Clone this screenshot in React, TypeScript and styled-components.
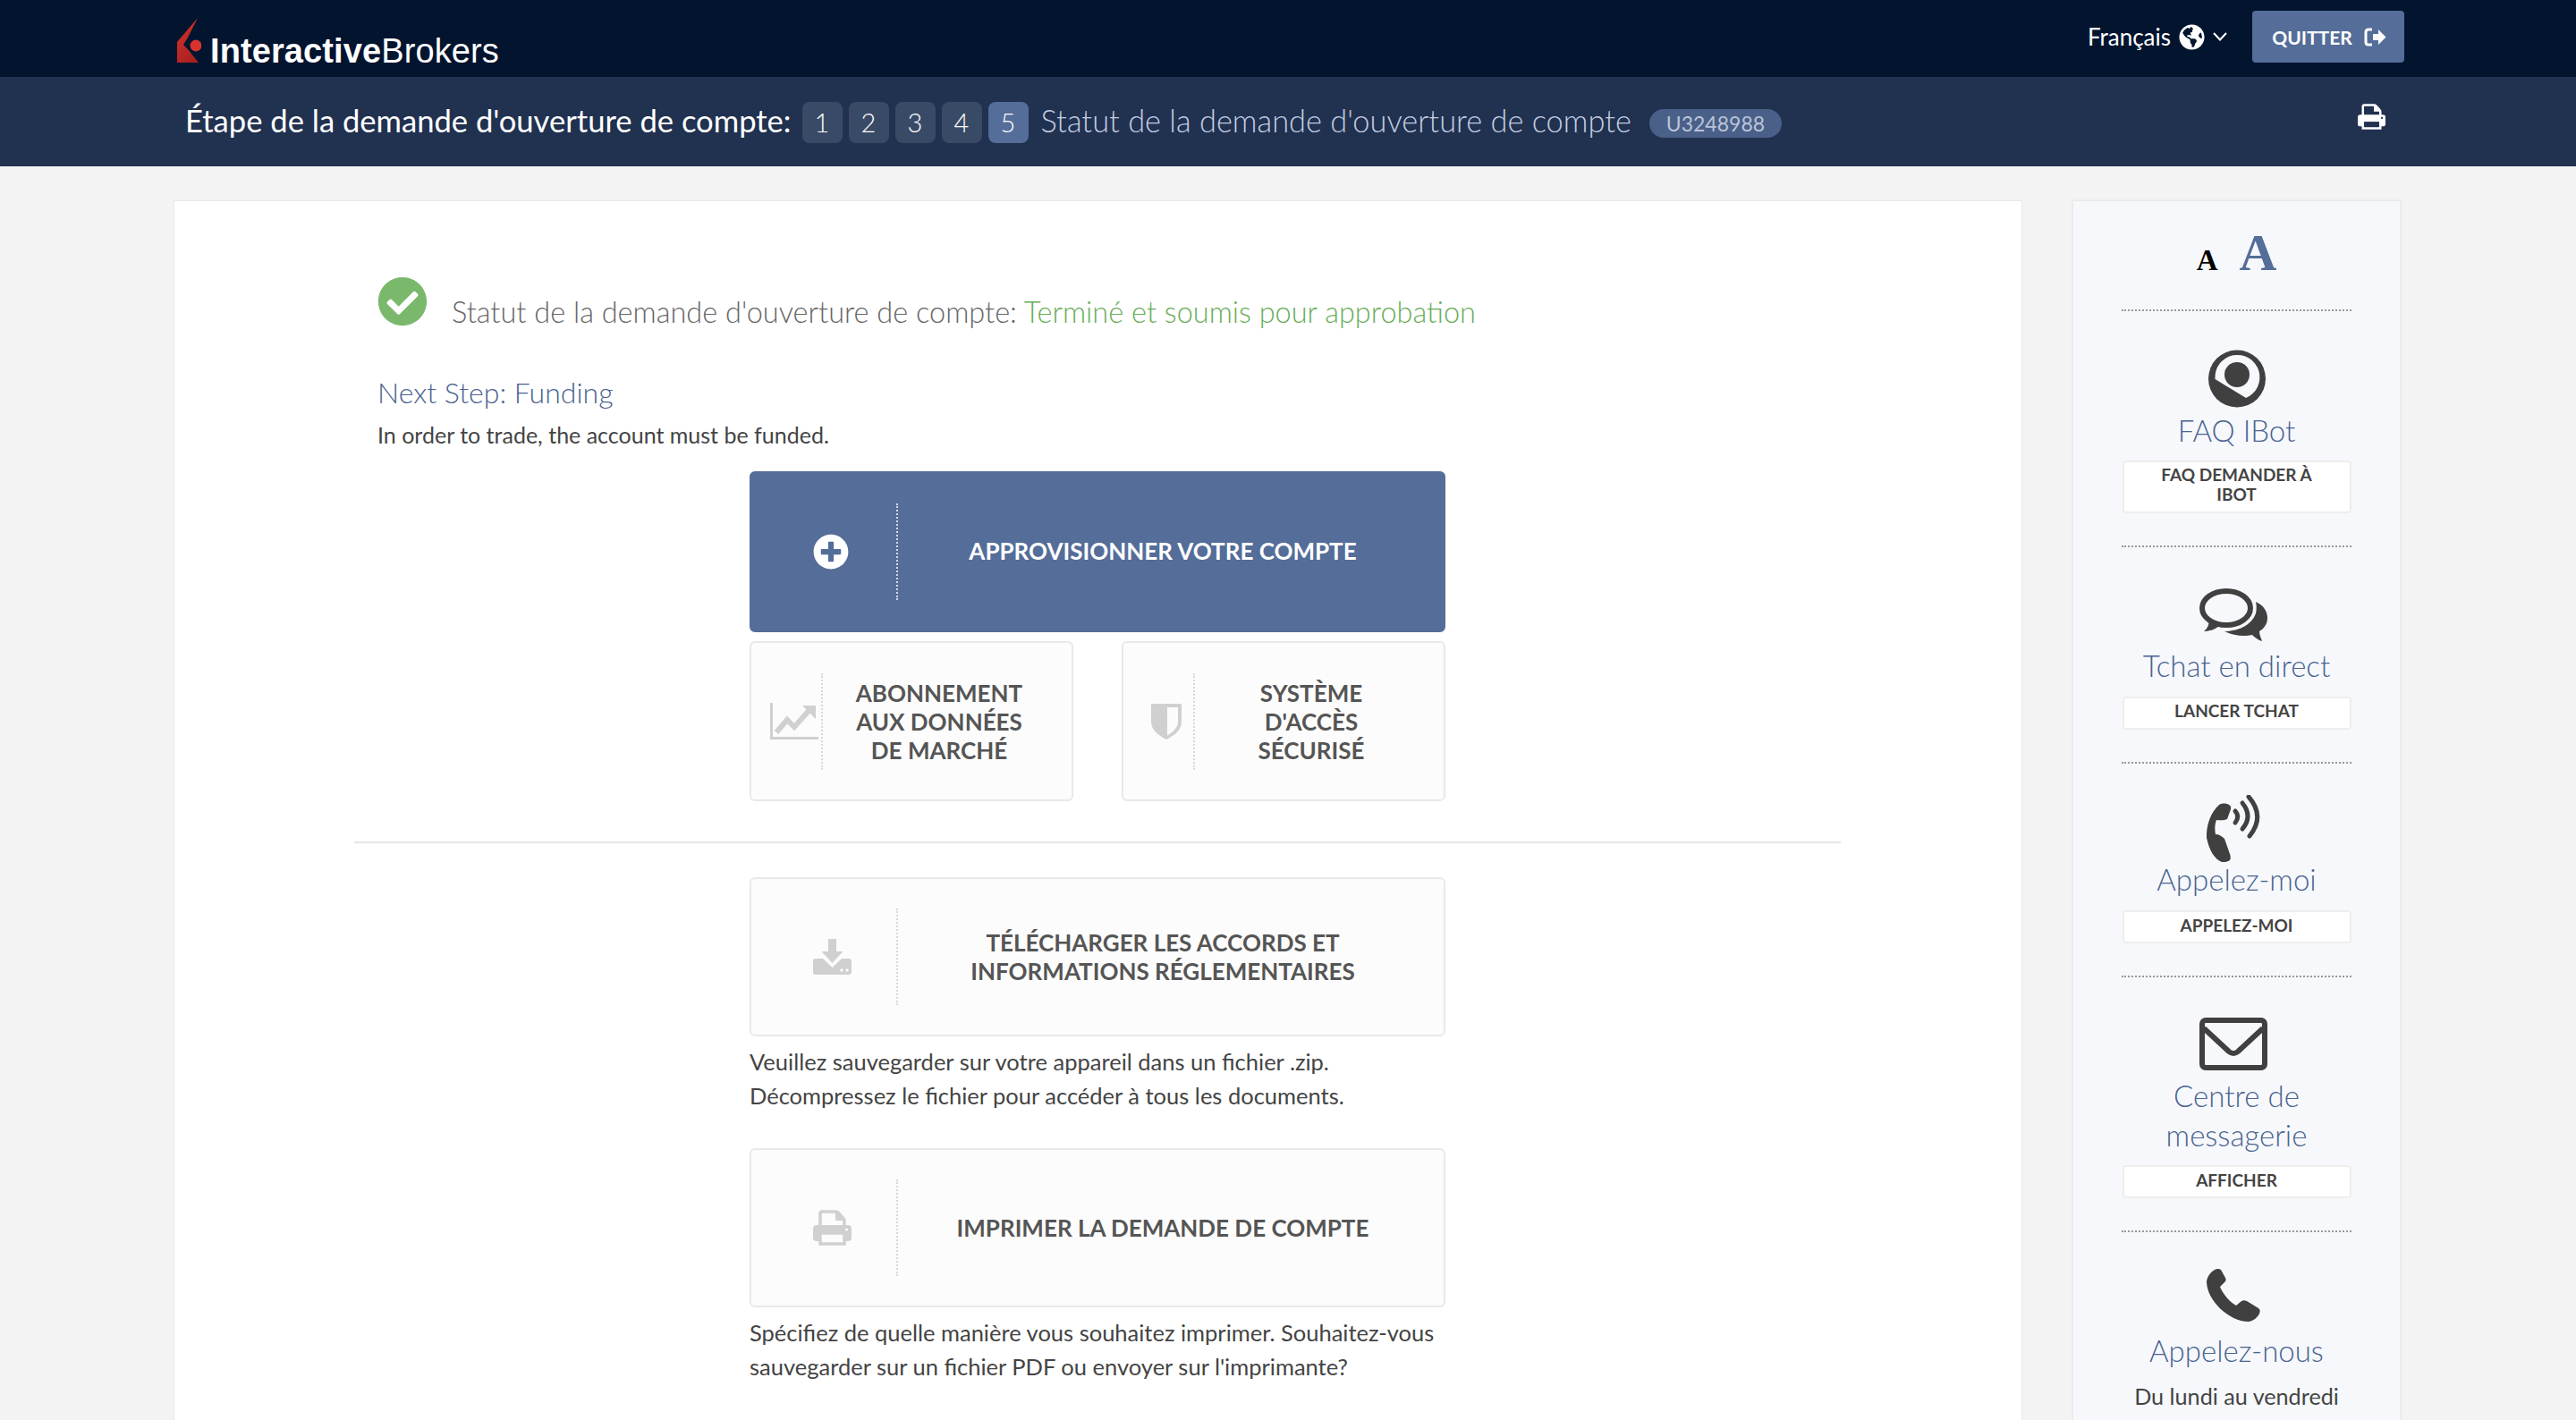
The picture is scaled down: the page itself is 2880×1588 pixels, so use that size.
import React from "react";
import styled, { createGlobalStyle } from "styled-components";
import { FaCheckCircle, FaGlobeAmericas, FaPlusCircle } from "react-icons/fa";

const GlobalStyle = createGlobalStyle`
  html, body {
    margin: 0;
    height: 1588px;
    overflow: hidden;
    background: #f3f3f4;
    font-family: Lato, "Noto Sans", sans-serif;
  }
  * { box-sizing: border-box; }
`;

const BLUE = "#546d99";
const BLUE_TEXT = "#4a6390";

const TopBar = styled.header`
  height: 86px;
  background: #03142f;
  display: flex;
  justify-content: space-between;
  padding: 0 192px 0 198px;
`;
const Brand = styled.div`
  display: flex;
  align-items: flex-end;
  gap: 10px;
  padding-bottom: 16px;
`;
const BrandName = styled.div`
  font-family: "Liberation Sans", sans-serif;
  font-size: 38px;
  line-height: 38px;
  height: 32px;
  color: #fff;
  letter-spacing: 0.1px;
  b { font-weight: 700; }
`;
const TopRight = styled.div`
  display: flex;
  align-items: flex-start;
`;
const LangPicker = styled.div`
  display: flex;
  align-items: center;
  gap: 9px;
  height: 30px;
  margin-top: 26px;
  margin-right: 28px;
  color: #fff;
  font-size: 26px;
`;
const QuitButton = styled.button`
  width: 170px;
  height: 58px;
  margin-top: 12px;
  padding-right: 4px;
  border: 0;
  border-radius: 4px;
  background: ${BLUE};
  color: #fff;
  font: 700 21px Lato, sans-serif;
  display: flex;
  align-items: center;
  justify-content: center;
  gap: 13px;
`;

const StepBar = styled.div`
  height: 100px;
  background: #213150;
  display: flex;
  align-items: flex-start;
  padding: 28px 0 0 207px;
  position: relative;
`;
const StepLabel = styled.div`
  color: #fff;
  font-size: 34.6px;
  line-height: 42px;
  margin-right: 12px;
`;
const StepNumber = styled.div<{ $active?: boolean }>`
  width: 45px;
  height: 46px;
  margin-right: 7px;
  border-radius: 8px;
  background: ${(p) => (p.$active ? BLUE : "#394a66")};
  color: #fff;
  font-size: 29px;
  font-weight: 300;
  line-height: 46px;
  text-align: center;
`;
const StepTitle = styled.div`
  color: #c2cde0;
  font-size: 34.4px;
  font-weight: 300;
  line-height: 41px;
  margin: 0 20px 0 7px;
`;
const AccountBadge = styled.div`
  width: 148px;
  height: 32px;
  margin-top: 8px;
  border-radius: 16px;
  background: #4a6088;
  color: #b9c5d9;
  font-size: 23px;
  line-height: 32px;
  text-align: center;
`;
const PrintLink = styled.div`
  position: absolute;
  left: 2636px;
  top: 30px;
  color: #fff;
  display: flex;
`;

const Page = styled.main`
  display: flex;
  align-items: flex-start;
  gap: 56px;
  padding: 38px 0 0 194px;
`;
const MainCard = styled.section`
  width: 2067px;
  height: 1400px;
  background: #fff;
  border: 1px solid #e9e9e9;
  padding: 84px 202px 0 201px;
`;
const StatusRow = styled.div`
  display: flex;
  padding-left: 26px;
  gap: 27px;
  color: #7ab96c;
`;
const StatusText = styled.div`
  margin-top: 20px;
  color: #666;
  font-size: 32.5px;
  font-weight: 300;
  line-height: 40px;
  span { color: #68ad58; }
`;
const NextTitle = styled.h2`
  margin: 50px 0 0 26px;
  color: ${BLUE_TEXT};
  font-size: 32px;
  font-weight: 300;
  line-height: 40px;
`;
const Lead = styled.p`
  margin: 12px 0 26px 26px;
  color: #444;
  font-size: 25px;
  line-height: 30px;
`;
const Actions = styled.div`
  width: 778px;
  margin-left: 442px;
`;
const ActionCard = styled.div<{ $primary?: boolean; $small?: boolean }>`
  display: flex;
  align-items: center;
  height: ${(p) => (p.$primary ? 180 : p.$small ? 179 : 178)}px;
  flex: 1;
  border: 2px solid ${(p) => (p.$primary ? BLUE : "#e9e9e9")};
  border-radius: 6px;
  background: ${(p) => (p.$primary ? BLUE : "#fcfcfc")};
  color: ${(p) => (p.$primary ? "#fff" : "#d0d0d0")};
`;
const ActionIcon = styled.div<{ $primary?: boolean; $small?: boolean }>`
  width: ${(p) => (p.$small ? 80 : 164)}px;
  height: 108px;
  padding-left: ${(p) => (p.$small ? 17 : p.$primary ? 16 : 18)}px;
  display: flex;
  align-items: center;
  justify-content: center;
  border-right: 2px dotted ${(p) => (p.$primary ? "rgba(255,255,255,.75)" : "#d8d8d8")};
`;
const ActionLabel = styled.div<{ $primary?: boolean }>`
  flex: 1;
  padding: 0 18px ${(p) => (p.$primary ? 3 : 0)}px 0;
  text-align: center;
  color: ${(p) => (p.$primary ? "#fff" : "#555")};
  font-size: 26px;
  font-weight: 700;
  line-height: 32px;
`;
const SmallRow = styled.div`
  display: flex;
  gap: 54px;
  margin-top: 10px;
`;
const Rule = styled.hr`
  margin: 45px 0 38px;
  border: 0;
  border-top: 2px solid #e7e7e7;
`;
const Note = styled.p`
  margin: 9px 0 40px;
  color: #444;
  font-size: 25.5px;
  line-height: 38px;
`;

const SidePanel = styled.aside`
  width: 367px;
  height: 1400px;
  background: #f6f8fb;
  border: 1px solid #e9e9e9;
  box-shadow: 0 0 3px #e6e6e6;
  padding: 0 54px;
`;
const FontSizer = styled.div`
  height: 123px;
  padding-top: 24px;
  display: flex;
  justify-content: center;
  align-items: baseline;
  gap: 24px;
  border-bottom: 2px dotted #999;
  font-family: "Liberation Serif", serif;
  font-weight: 700;
`;
const SmallA = styled.span`
  font-size: 33px;
  color: #000;
`;
const LargeA = styled.span`
  font-size: 58px;
  color: ${BLUE};
`;
const SideSection = styled.div<{ $top: number }>`
  display: flex;
  flex-direction: column;
  align-items: center;
  padding: ${(p) => p.$top}px 0 36px;
  border-bottom: 2px dotted #999;
  &:last-child { border-bottom: 0; }
`;
const SideIcon = styled.div<{ $shift?: boolean }>`
  height: 70px;
  margin-right: ${(p) => (p.$shift ? 7 : 0)}px;
  display: flex;
  align-items: center;
  justify-content: center;
  color: #404040;
`;
const SideTitle = styled.div<{ $nudge?: number }>`
  margin-top: ${(p) => p.$nudge ?? 0}px;
  margin-bottom: -${(p) => p.$nudge ?? 0}px;
  color: ${BLUE_TEXT};
  font-size: 33px;
  font-weight: 300;
  line-height: 44px;
  text-align: center;
`;
const SideButton = styled.div<{ $tight?: boolean }>`
  width: 256px;
  margin-top: 13px;
  padding: ${(p) => (p.$tight ? "3px 30px 8px" : "4px 30px 7px")};
  border: 2px solid #eeeeee;
  border-radius: 4px;
  background: #fff;
  color: #444;
  font-size: 19px;
  font-weight: 700;
  line-height: 22px;
  text-align: center;
`;
const SideText = styled.div`
  margin-top: 18px;
  color: #444;
  font-size: 25.2px;
  line-height: 32px;
`;

const LogoMark = () => (
  <svg width="27" height="50" viewBox="0 0 27 50">
    <defs>
      <linearGradient id="mark" x1="0" y1="0" x2="0.6" y2="1">
        <stop offset="0" stopColor="#d8342e" />
        <stop offset="1" stopColor="#a8211f" />
      </linearGradient>
    </defs>
    <path d="M23 0 L0 27 V50 H24 L12 35 L7 30 L12 22 Z" fill="url(#mark)" />
    <circle cx="21" cy="31" r="6.5" fill="#d8342e" />
  </svg>
);

const ExitIcon = () => (
  <svg width="25" height="21" viewBox="0 0 25 21">
    <path d="M9 2 H5 Q2 2 2 5 V16 Q2 19 5 19 H9" fill="none" stroke="currentColor" strokeWidth="3" />
    <path d="M10 7 H16 V2 L24.5 10.5 L16 19 V14 H10 Z" fill="currentColor" />
  </svg>
);

const ChevronIcon = () => (
  <svg width="16" height="10" viewBox="0 0 16 10">
    <path d="M1 1 L8 8.5 L15 1" fill="none" stroke="currentColor" strokeWidth="2" />
  </svg>
);

const PrintIcon = ({ width, height, paper }: { width: number; height: number; paper: string }) => (
  <svg width={width} height={height} viewBox="0 0 43 40">
    <path d="M8 20 V4 Q8 2 10 2 H25 Q27 2 28.5 3.5 L33.5 9 Q35 10.5 35 12 V20" fill={paper} stroke="currentColor" strokeWidth="3.5" />
    <path d="M25 2 V12 H35" fill="currentColor" />
    <rect x="0" y="17" width="43" height="18" rx="4" fill="currentColor" />
    <rect x="8" y="26" width="27" height="12" fill={paper} stroke="currentColor" strokeWidth="3.5" />
    <circle cx="37.5" cy="22" r="1.6" fill={paper} />
  </svg>
);

const ChartIcon = () => (
  <svg width="54" height="41" viewBox="0 0 54 41">
    <path d="M1.5 0 V39.5 H54" fill="none" stroke="currentColor" strokeWidth="3" />
    <path d="M7 33 L19 19 L27 27 L44 8" fill="none" stroke="currentColor" strokeWidth="6" />
    <path d="M36 3 H51 V18 Z" fill="currentColor" />
  </svg>
);

const ShieldIcon = () => (
  <svg width="34" height="40" viewBox="0 0 34 40">
    <path d="M0 0 H34 V20 C34 30 25 36 17 40 C9 36 0 30 0 20 Z" fill="currentColor" />
    <path d="M18 4 H30 V20 C30 27 24 32 18 35.5 Z" fill="#fcfcfc" />
  </svg>
);

const DownloadIcon = () => (
  <svg width="43" height="40" viewBox="0 0 43 40">
    <path d="M17 0 H26 V14 H33.5 L21.5 27 L9.5 14 H17 Z" fill="currentColor" />
    <path d="M3 22 H11 L21.5 32 L32 22 H40 Q43 22 43 25 V37 Q43 40 40 40 H3 Q0 40 0 37 V25 Q0 22 3 22 Z" fill="currentColor" />
    <circle cx="32" cy="35" r="1.7" fill="#fcfcfc" />
    <circle cx="38" cy="35" r="1.7" fill="#fcfcfc" />
  </svg>
);

const BotIcon = () => (
  <svg width="64" height="65" viewBox="0 0 64 65">
    <circle cx="32" cy="32.5" r="32" fill="currentColor" />
    <path d="M7.5 33 A25 25 0 1 1 42 54 Z" fill="#f6f8fb" />
    <circle cx="32" cy="28" r="14" fill="currentColor" />
  </svg>
);

const ChatIcon = () => (
  <svg width="76" height="59" viewBox="0 0 76 59">
    <ellipse cx="30" cy="22" rx="27" ry="19" fill="none" stroke="currentColor" strokeWidth="6" />
    <path d="M11 34 C11 40 9 45 5 48 C11 48 18 46 23 41 Z" fill="currentColor" />
    <path d="M63 15 C72 19 76 26 76 33 C76 40 72 45 67 48 C67 52 69 56 70 59 C66 58 62 55 59 52 C50 54 38 53 28 48 C42 48 58 42 63 28 C64 24 64 19 63 15 Z" fill="currentColor" />
  </svg>
);

const CallMeIcon = () => (
  <svg width="60" height="75" viewBox="0 0 60 75">
    <path d="M14 11 C17 9 22 9 25 11 C27 12 27.5 14 27 16 L23 27 C19 29 14 28 11 28 C9 33 9 39 10 44 C14 44 17 46 20 49 L26 66 C27 69 27 71 26 73 C23 75 20 75.5 17 75 C9 72 3 62 0 48 C-0.5 35 4 20 14 11 Z" fill="currentColor" />
    <path d="M32 18 Q37.5 24 32 31" fill="none" stroke="currentColor" strokeWidth="5" strokeLinecap="round" />
    <path d="M40 9 Q52 24 40 38" fill="none" stroke="currentColor" strokeWidth="5" strokeLinecap="round" />
    <path d="M47 2 Q66 24 48 46" fill="none" stroke="currentColor" strokeWidth="5" strokeLinecap="round" />
  </svg>
);

const MailIcon = () => (
  <svg width="76" height="59" viewBox="0 0 76 59">
    <rect x="3" y="3" width="70" height="53" rx="4" fill="none" stroke="currentColor" strokeWidth="6" />
    <path d="M5 12 L33 38 Q38 42 43 38 L71 12" fill="none" stroke="currentColor" strokeWidth="6" />
  </svg>
);

const PhoneIcon = () => (
  <svg width="60" height="59" viewBox="0 0 60 59">
    <path d="M9 1 C11 0 14 -0.5 16 1 L21 10 C22 12 21.5 14 20 15 L15 20 C18 28 26 37 33 41 L39 36 C41 35 43 35 45 36 L58 44 C60 45.5 60 48 59 50 C57 54 53 58 47 59 C25 59 0 35 0 14 C1 8 5 3 9 1 Z" fill="currentColor" />
  </svg>
);

const App = () => {
  return (
    <>
      <GlobalStyle />
      <TopBar>
        <Brand>
          <LogoMark />
          <BrandName>
            <b>Interactive</b>Brokers
          </BrandName>
        </Brand>
        <TopRight>
          <LangPicker>
            Français <FaGlobeAmericas size={29} /> <ChevronIcon />
          </LangPicker>
          <QuitButton>
            QUITTER <ExitIcon />
          </QuitButton>
        </TopRight>
      </TopBar>
      <StepBar>
        <StepLabel>Étape de la demande d'ouverture de compte:</StepLabel>
        <StepNumber>1</StepNumber>
        <StepNumber>2</StepNumber>
        <StepNumber>3</StepNumber>
        <StepNumber>4</StepNumber>
        <StepNumber $active>5</StepNumber>
        <StepTitle>Statut de la demande d'ouverture de compte</StepTitle>
        <AccountBadge>U3248988</AccountBadge>
        <PrintLink>
          <PrintIcon width={31} height={29} paper="#213150" />
        </PrintLink>
      </StepBar>
      <Page>
        <MainCard>
          <StatusRow>
            <FaCheckCircle size={56} />
            <StatusText>
              Statut de la demande d'ouverture de compte: <span>Terminé et soumis pour approbation</span>
            </StatusText>
          </StatusRow>
          <NextTitle>Next Step: Funding</NextTitle>
          <Lead>In order to trade, the account must be funded.</Lead>
          <Actions>
            <ActionCard $primary>
              <ActionIcon $primary>
                <FaPlusCircle size={40} />
              </ActionIcon>
              <ActionLabel $primary>APPROVISIONNER VOTRE COMPTE</ActionLabel>
            </ActionCard>
            <SmallRow>
              <ActionCard $small>
                <ActionIcon $small>
                  <ChartIcon />
                </ActionIcon>
                <ActionLabel>
                  ABONNEMENT
                  <br />
                  AUX DONNÉES
                  <br />
                  DE MARCHÉ
                </ActionLabel>
              </ActionCard>
              <ActionCard $small>
                <ActionIcon $small>
                  <ShieldIcon />
                </ActionIcon>
                <ActionLabel>
                  SYSTÈME
                  <br />
                  D'ACCÈS
                  <br />
                  SÉCURISÉ
                </ActionLabel>
              </ActionCard>
            </SmallRow>
          </Actions>
          <Rule />
          <Actions>
            <ActionCard>
              <ActionIcon>
                <DownloadIcon />
              </ActionIcon>
              <ActionLabel>
                TÉLÉCHARGER LES ACCORDS ET
                <br />
                INFORMATIONS RÉGLEMENTAIRES
              </ActionLabel>
            </ActionCard>
            <Note>
              Veuillez sauvegarder sur votre appareil dans un fichier .zip.
              <br />
              Décompressez le fichier pour accéder à tous les documents.
            </Note>
            <ActionCard>
              <ActionIcon>
                <PrintIcon width={43} height={40} paper="#fcfcfc" />
              </ActionIcon>
              <ActionLabel>IMPRIMER LA DEMANDE DE COMPTE</ActionLabel>
            </ActionCard>
            <Note>
              Spécifiez de quelle manière vous souhaitez imprimer. Souhaitez-vous
              <br />
              sauvegarder sur un fichier PDF ou envoyer sur l'imprimante?
            </Note>
          </Actions>
        </MainCard>
        <SidePanel>
          <FontSizer>
            <SmallA>A</SmallA>
            <LargeA>A</LargeA>
          </FontSizer>
          <SideSection $top={40}>
            <SideIcon>
              <BotIcon />
            </SideIcon>
            <SideTitle $nudge={1}>FAQ IBot</SideTitle>
            <SideButton $tight>
              FAQ DEMANDER À
              <br />
              IBOT
            </SideButton>
          </SideSection>
          <SideSection $top={40}>
            <SideIcon $shift>
              <ChatIcon />
            </SideIcon>
            <SideTitle>Tchat en direct</SideTitle>
            <SideButton $tight>LANCER TCHAT</SideButton>
          </SideSection>
          <SideSection $top={37}>
            <SideIcon $shift>
              <CallMeIcon />
            </SideIcon>
            <SideTitle>Appelez-moi</SideTitle>
            <SideButton>APPELEZ-MOI</SideButton>
          </SideSection>
          <SideSection $top={39}>
            <SideIcon $shift>
              <MailIcon />
            </SideIcon>
            <SideTitle $nudge={1}>
              Centre de
              <br />
              messagerie
            </SideTitle>
            <SideButton>AFFICHER</SideButton>
          </SideSection>
          <SideSection $top={35}>
            <SideIcon $shift>
              <PhoneIcon />
            </SideIcon>
            <SideTitle $nudge={5}>Appelez-nous</SideTitle>
            <SideText>Du lundi au vendredi</SideText>
          </SideSection>
        </SidePanel>
      </Page>
    </>
  );
};

export default App;
